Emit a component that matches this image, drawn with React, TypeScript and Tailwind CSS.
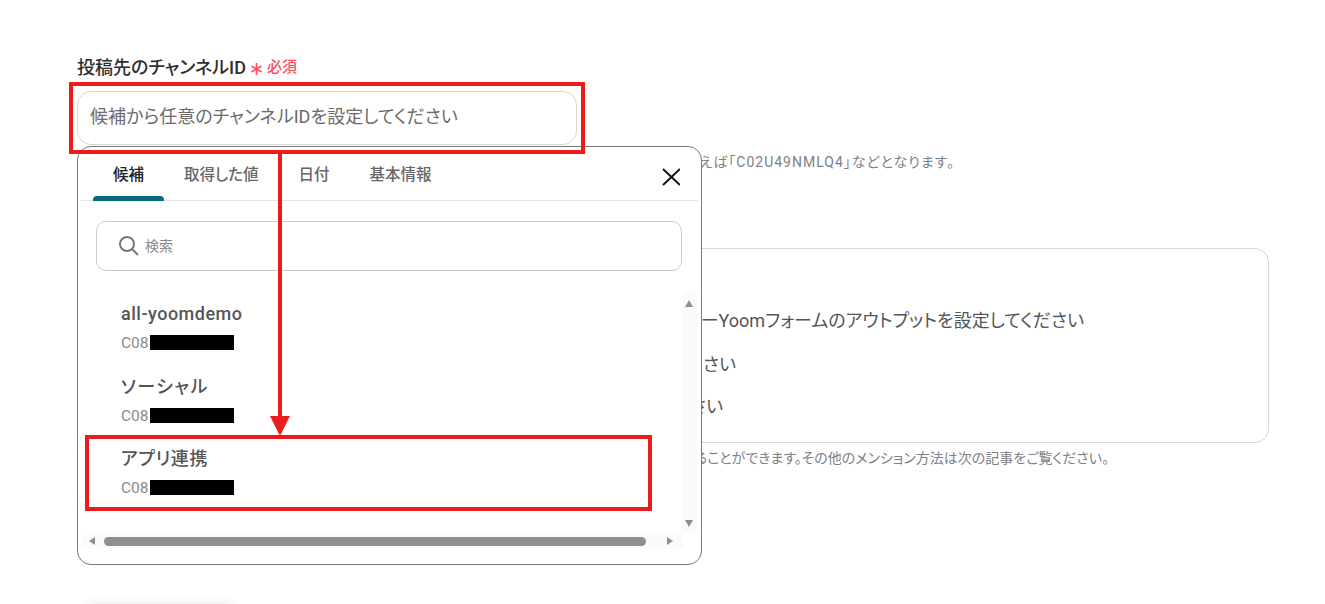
import React from "react";

const font = { fontFamily: 'Roboto, "Noto Sans CJK JP", sans-serif' };

function Item({ name, cls, nameCls }: { name: string; cls?: string; nameCls?: string }) {
  return (
    <div className={`pl-[43px] ${cls ?? ""}`}>
      <div className={`leading-[24px] font-medium text-[#555555] text-[18px] ${nameCls ?? ""}`}>{name}</div>
      <div className="mt-[8px] flex items-center h-[16px]">
        <span className="w-[29px] pt-[2px] text-[15.5px] leading-[16px] text-[#8a8a8a]">C08</span>
        <span className="w-[84px] h-[15px] bg-black" />
      </div>
    </div>
  );
}

export default function App() {
  return (
    <div className="relative w-[1325px] h-[604px] overflow-hidden bg-white [font-feature-settings:'palt']" style={font}>
      <div className="pl-[77px] pr-[56px] pt-[55px]">
        <div className="flex items-center h-[24px]">
          <span className="text-[18px] font-medium text-[#2e2e2e]">投稿先のチャンネルID</span>
          <svg className="ml-[5px] mt-[4px]" width="11" height="12" viewBox="0 0 11 12" fill="none" stroke="#ff4d5e" strokeWidth="1.6">
            <path d="M5.5 0V12M0.5 3L10.5 9M10.5 3L0.5 9" />
          </svg>
          <span className="ml-[5px] text-[15px] font-medium text-[#ff4d5e]">必須</span>
        </div>
        <div className="mt-[12px] w-[500px] h-[54px] rounded-[14px] border border-[#d5d7dc] flex items-center pl-[12px] pb-[3px] text-[18px] tracking-[0.05px] text-[#6b6b6b]">
          候補から任意のチャンネルIDを設定してください
        </div>
        <div className="mt-[8px] w-[878px] h-[18px] text-[14px] leading-[18px] text-[#7c8088] whitespace-nowrap text-right">
          チャンネルIDは候補から選択するか、チャンネル詳細から確認できます。例
          <span className="tracking-[1px]">えば「C02U49NMLQ4」などとなります。</span>
        </div>
        <div className="mt-[77px] h-[195px] rounded-[14px] border border-[#d5d7dc] text-[18px] text-[#555555]">
          <div className="mt-[60px] w-[1006px] text-right leading-[24px] whitespace-nowrap">Slackに投稿するメッセージを入力し、トリガーYoomフォームのアウトプットを設定してください</div>
          <div className="mt-[20px] w-[658px] text-right leading-[24px] whitespace-nowrap">必要に応じて任意のテキストを追加してください</div>
          <div className="mt-[18px] w-[645px] text-right leading-[24px] whitespace-nowrap">送信するメッセージの文面を確認してください</div>
        </div>
        <div className="mt-[6px] w-[1032px] h-[18px] text-[14px] leading-[18px] text-[#7c8088] whitespace-nowrap text-right">
          メッセージ内でメンションを行うには、ユーザーIDを指定することができます。その他のメンション方法は次の記事をご覧ください。
        </div>
      </div>

      {/* popup */}
      <div className="absolute left-[77px] top-[146px] w-[625px] h-[419px] bg-white border border-[#7a7a7a] rounded-[14px] overflow-hidden">
        <div className="relative h-[54px] mx-[3px] border-b border-[#e3e5e8] flex pl-[12px] text-[15.5px] font-medium text-[#666666]">
          <div className="relative w-[71px] text-center pt-[17px] leading-[22px] text-[#222222]">
            候補
            <span className="absolute left-0 right-0 bottom-[-1px] h-[5px] rounded-t-[4px] bg-[#0b6680]" />
          </div>
          <div className="ml-[20px] pt-[17px] leading-[22px]">取得した値</div>
          <div className="ml-[40px] pt-[17px] leading-[22px]">日付</div>
          <div className="ml-[40px] pt-[17px] leading-[22px]">基本情報</div>
          <svg className="absolute right-[18px] top-[19px]" width="20" height="20" viewBox="0 0 20 20" fill="none" stroke="#111" strokeWidth="2">
            <path d="M3 3L20 19M20 3L3 19" />
          </svg>
        </div>
        <div className="mt-[20px] ml-[18px] w-[586px] h-[50px] rounded-[10px] border border-[#c9cbcf] flex items-center pl-[21px]">
          <svg width="22" height="22" viewBox="0 0 22 22" fill="none" stroke="#777" strokeWidth="2">
            <circle cx="9" cy="9" r="7" />
            <path d="M14 14L20 20" />
          </svg>
          <span className="ml-[5px] text-[14px] text-[#8a8a8a]">検索</span>
        </div>
        <div className="mt-[22px] flex">
          <div className="w-[604px] h-[243px] pt-[9px]">
            <Item name="all-yoomdemo" nameCls="tracking-[0.5px]" />
            <Item name="ソーシャル" cls="mt-[25px]" nameCls="tracking-[1.5px]" />
            <Item name="アプリ連携" cls="mt-[24px]" nameCls="tracking-[0.6px]" />
          </div>
          <div className="relative w-[15px] h-[241px] -mt-[1px] bg-[#fafafa]">
            <svg className="absolute left-[2px] top-[7px]" width="10" height="10" viewBox="0 0 10 10"><path d="M5 1L9 8H1Z" fill="#8f8f8f" /></svg>
            <svg className="absolute left-[2px] bottom-[5px]" width="10" height="10" viewBox="0 0 10 10"><path d="M1 2H9L5 9Z" fill="#8f8f8f" /></svg>
          </div>
        </div>
        <div className="-mt-[1px] ml-[3px] w-[602px] h-[13px] bg-[#fafafa] relative">
          <svg className="absolute left-[6px] top-[1px]" width="10" height="10" viewBox="0 0 10 10"><path d="M8 1V9L2 5Z" fill="#8f8f8f" /></svg>
          <div className="absolute left-[23px] top-[2px] w-[542px] h-[9px] rounded-full bg-[#8f8f8f]" />
          <svg className="absolute right-[8px] top-[1px]" width="10" height="10" viewBox="0 0 10 10"><path d="M2 1V9L8 5Z" fill="#8f8f8f" /></svg>
        </div>
      </div>

      {/* annotations */}
      <div className="absolute left-[69px] top-[82px] w-[516px] h-[72px] border-[4px] border-[#ea1c1c]" />
      <div className="absolute left-[278px] top-[154px] w-[4px] h-[263px] bg-[#ea1c1c]" />
      <svg className="absolute left-[270px] top-[416px]" width="20" height="20" viewBox="0 0 20 20"><path d="M0 0H20L10 20Z" fill="#ea1c1c" /></svg>
      <div className="absolute left-[85px] top-[435px] w-[567px] h-[76px] border-[4px] border-[#ea1c1c]" />
      <div className="absolute left-[85px] top-[604px] w-[150px] h-[40px] rounded-[8px] shadow-[0_0_10px_rgba(0,0,0,0.1)]" />
    </div>
  );
}
